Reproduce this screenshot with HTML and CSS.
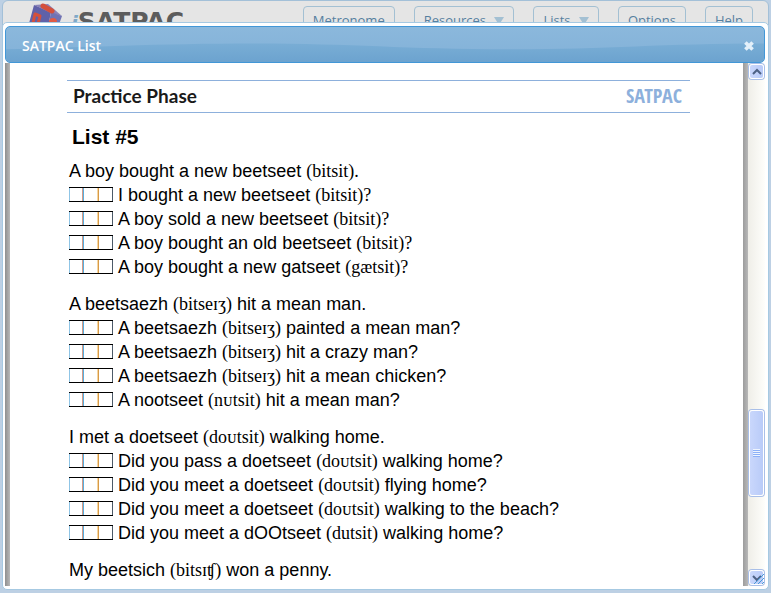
FILE: index.html
```
<!DOCTYPE html>
<html lang="en">
<head>
  <meta charset="UTF-8">
  <meta name="viewport" content="width=device-width, initial-scale=1.0">
  <title>SATPAC List</title>
  <link rel="stylesheet" href="styles.css">
</head>
<body>
  <header class="toolbar">
    <a class="logo" href="#">
      <svg class="logo-cube" viewBox="0 0 36 36" width="36" height="36" aria-hidden="true">
        <path d="M7 2 L24 9 L19 34 L1 24 Z" fill="#6061a8"/>
        <path d="M7 2 L21 1 L35 13 L24 10 Z" fill="#8a83b8"/>
        <path d="M24 9 L35 13 L29 30 L19 34 Z" fill="#7073b4"/>
        <path d="M16 3 L25 8" fill="none" stroke="#d4503c" stroke-width="5" stroke-linecap="round"/>
        <path d="M8 11 L13 13 M8 11 L6 20 M13 13 L11 21" fill="none" stroke="#d4503c" stroke-width="3" stroke-linecap="round"/>
        <circle cx="26" cy="19" r="4" fill="#e05a44"/>
      </svg>
      <span class="logo-text"><i>i</i>SATPAC</span>
    </a>
    <nav class="menu">
      <button type="button">Metronome</button>
      <button type="button">Resources <span class="arrow"></span></button>
      <button type="button">Lists <span class="arrow"></span></button>
      <button type="button">Options</button>
      <button type="button">Help</button>
    </nav>
  </header>

  <section class="dialog" role="dialog" aria-labelledby="dialog-title">
    <div class="titlebar">
      <svg class="wave" viewBox="0 0 760 36" preserveAspectRatio="none" aria-hidden="true">
        <defs>
          <linearGradient id="gloss" x1="0" y1="0" x2="0" y2="1">
            <stop offset="0" stop-color="#79add5"/>
            <stop offset="1" stop-color="#6ca3cf"/>
          </linearGradient>
        </defs>
        <path d="M0 23 C80 21 150 17 250 17 C350 17 400 23 510 23 C600 23 660 17 760 17 V36 H0 Z" fill="url(#gloss)"/>
      </svg>
      <h1 id="dialog-title">SATPAC List</h1>
      <button class="close" type="button" aria-label="Close">
        <svg viewBox="0 0 10 10" width="12" height="12"><path d="M2 2 L8 8 M8 2 L2 8" stroke="#e4f0fa" stroke-width="3"/></svg>
      </button>
    </div>

    <div class="dialog-body">
      <main class="page">
        <div class="page-head">
          <span class="phase">Practice Phase</span>
          <span class="brand">SATPAC</span>
        </div>
        <h2>List #5</h2>

        <div class="group">
          <p>A boy bought a new beetseet <span class="ipa">(bitsit).</span></p>
          <p><span class="ticks"><input type="checkbox" aria-label="First try"><input type="checkbox" aria-label="Second try"><input type="checkbox" aria-label="Third try"></span>I bought a new beetseet <span class="ipa">(bitsit)?</span></p>
          <p><span class="ticks"><input type="checkbox" aria-label="First try"><input type="checkbox" aria-label="Second try"><input type="checkbox" aria-label="Third try"></span>A boy sold a new beetseet <span class="ipa">(bitsit)?</span></p>
          <p><span class="ticks"><input type="checkbox" aria-label="First try"><input type="checkbox" aria-label="Second try"><input type="checkbox" aria-label="Third try"></span>A boy bought an old beetseet <span class="ipa">(bitsit)?</span></p>
          <p><span class="ticks"><input type="checkbox" aria-label="First try"><input type="checkbox" aria-label="Second try"><input type="checkbox" aria-label="Third try"></span>A boy bought a new gatseet <span class="ipa">(gætsit)?</span></p>
        </div>

        <div class="group">
          <p>A beetsaezh <span class="ipa">(bitseɪʒ)</span> hit a mean man.</p>
          <p><span class="ticks"><input type="checkbox" aria-label="First try"><input type="checkbox" aria-label="Second try"><input type="checkbox" aria-label="Third try"></span>A beetsaezh <span class="ipa">(bitseɪʒ)</span> painted a mean man?</p>
          <p><span class="ticks"><input type="checkbox" aria-label="First try"><input type="checkbox" aria-label="Second try"><input type="checkbox" aria-label="Third try"></span>A beetsaezh <span class="ipa">(bitseɪʒ)</span> hit a crazy man?</p>
          <p><span class="ticks"><input type="checkbox" aria-label="First try"><input type="checkbox" aria-label="Second try"><input type="checkbox" aria-label="Third try"></span>A beetsaezh <span class="ipa">(bitseɪʒ)</span> hit a mean chicken?</p>
          <p><span class="ticks"><input type="checkbox" aria-label="First try"><input type="checkbox" aria-label="Second try"><input type="checkbox" aria-label="Third try"></span>A nootseet <span class="ipa">(nᴜtsit)</span> hit a mean man?</p>
        </div>

        <div class="group">
          <p>I met a doetseet <span class="ipa">(doᴜtsit)</span> walking home.</p>
          <p><span class="ticks"><input type="checkbox" aria-label="First try"><input type="checkbox" aria-label="Second try"><input type="checkbox" aria-label="Third try"></span>Did you pass a doetseet <span class="ipa">(doᴜtsit)</span> walking home?</p>
          <p><span class="ticks"><input type="checkbox" aria-label="First try"><input type="checkbox" aria-label="Second try"><input type="checkbox" aria-label="Third try"></span>Did you meet a doetseet <span class="ipa">(doᴜtsit)</span> flying home?</p>
          <p><span class="ticks"><input type="checkbox" aria-label="First try"><input type="checkbox" aria-label="Second try"><input type="checkbox" aria-label="Third try"></span>Did you meet a doetseet <span class="ipa">(doᴜtsit)</span> walking to the beach?</p>
          <p><span class="ticks"><input type="checkbox" aria-label="First try"><input type="checkbox" aria-label="Second try"><input type="checkbox" aria-label="Third try"></span>Did you meet a dOOtseet <span class="ipa">(dutsit)</span> walking home?</p>
        </div>

        <div class="group">
          <p>My beetsich <span class="ipa">(bitsɪʧ)</span> won a penny.</p>
        </div>
      </main>

      <div class="scrollbar">
        <button type="button" aria-label="Scroll up">
          <svg viewBox="0 0 10 8" width="10" height="8"><path d="M1 6 L5 2 L9 6" fill="none" stroke="#4d6185" stroke-width="2"/></svg>
        </button>
        <div class="track-above"></div>
        <div class="thumb"><span class="grip"></span></div>
        <div class="track-below"></div>
        <button type="button" aria-label="Scroll down">
          <svg viewBox="0 0 10 8" width="10" height="8"><path d="M1 2 L5 6 L9 2" fill="none" stroke="#4d6185" stroke-width="2"/></svg>
        </button>
      </div>
    </div>
    <svg class="resize" viewBox="0 0 12 12" width="12" height="12" aria-hidden="true">
      <path d="M1 11 L11 1 M5 11 L11 5 M9 11 L11 9" stroke="#4b9bd8" stroke-width="1"/>
    </svg>
  </section>
</body>
</html>
```

FILE: styles.css
```
* {
  margin: 0;
  padding: 0;
  box-sizing: border-box;
}

body {
  font-family: "Liberation Sans", Arial, sans-serif;
  background: #bdd0e4;
  height: 100vh;
  overflow: hidden;
  padding: 0 2px;
}

button {
  font: inherit;
  cursor: pointer;
}

/* Toolbar behind the dialog */
.toolbar {
  display: flex;
  justify-content: space-between;
  align-items: flex-start;
  height: 48px;
  padding: 2px 15px 0 24px;
  background: #e5e5e5;
  border: 1px solid #a3c0d8;
  border-radius: 6px;
}

.logo {
  display: flex;
  gap: 8px;
  text-decoration: none;
}

.logo-text {
  font-family: "DejaVu Sans", sans-serif;
  font-weight: bold;
  font-size: 25px;
  line-height: 38px;
  color: #5c5c5c;
}

.logo-text i {
  font-size: 20px;
  color: #7fa9c8;
}

.menu {
  display: flex;
  gap: 19px;
  padding-top: 3px;
}

.menu button {
  font-family: "Open Sans", sans-serif;
  font-size: 13px;
  line-height: 16px;
  color: #557f9f;
  background: none;
  border: 1px solid #a3c0d3;
  border-radius: 4px;
  padding: 5px 9px;
}

.arrow {
  display: inline-block;
  margin-left: 5px;
  border: 5px solid transparent;
  border-top: 8px solid #a3c0d3;
  border-bottom: 0;
}

/* Dialog */
.dialog {
  position: absolute;
  inset: 22px 2px 3px;
  display: flex;
  flex-direction: column;
  padding: 3px 3px 3px 2px;
  background: #fff;
  border: 1px solid #a6c9e2;
  border-radius: 5px;
}

.titlebar {
  position: relative;
  display: flex;
  justify-content: space-between;
  align-items: center;
  height: 37px;
  flex: none;
  padding: 2px 9px 0 16px;
  color: #fff;
  background: linear-gradient(#8bb8dc, #82b1d8);
  border: 1px solid #4297d7;
  border-radius: 5px;
  overflow: hidden;
}

.wave {
  position: absolute;
  inset: 0;
  width: 100%;
  height: 100%;
}

.titlebar h1 {
  position: relative;
  font-family: "Open Sans", sans-serif;
  font-size: 14px;
  font-weight: 600;
}

.close {
  position: relative;
  display: flex;
  background: none;
  border: 0;
}

.dialog-body {
  flex: 1;
  min-height: 0;
  display: flex;
}

.page {
  flex: 1;
  overflow: hidden;
  padding: 17px 53px 0 57px;
  border: solid #a9a9a9;
  border-width: 0 5px;
  border-image: linear-gradient(to right, #8f8f8f, #b8b8b8 5px, #8f8f8f 99%, #b8b8b8) 0 5;
  color: #000;
}

.page-head {
  display: flex;
  justify-content: space-between;
  align-items: center;
  height: 33px;
  padding: 0 8px 2px 6px;
  border: solid #8db0dc;
  border-width: 1px 0;
}

.phase {
  font-family: Lato, sans-serif;
  font-size: 19px;
  font-weight: bold;
  color: #1a1a1a;
}

.brand {
  font-family: "Open Sans Condensed", "Lato", sans-serif;
  font-size: 20px;
  line-height: 24px;
  font-weight: bold;
  color: #8db0dc;
}

.page h2 {
  font-size: 21px;
  line-height: 24px;
  padding: 12px 5px 10px;
}

.group {
  padding-left: 2px;
  margin-bottom: 13px;
  font-size: 18px;
  line-height: 24px;
}

.group p {
  display: flex;
  align-items: center;
  white-space: pre;
}

.ticks {
  display: flex;
  margin: 0 5px 1px 0;
}

.ticks input {
  appearance: none;
  width: 15px;
  height: 15px;
  border: solid #000;
  border-width: 1px 0;
  box-shadow: inset 1px 0 #58aede, inset -1px 0 #f6d6a0;
}

.ticks input:first-child {
  width: 14px;
  box-shadow: inset 1px 0 #8fc5e6, inset -1px 0 #d39a88;
}

.ticks input:last-child {
  box-shadow: inset 1px 0 #d79a48, inset -1px 0 #4c5a68;
}

.ipa {
  font-family: "Liberation Serif", "Times New Roman", serif;
}

/* Scrollbar */
.scrollbar {
  display: flex;
  flex-direction: column;
  width: 17px;
  padding: 1px;
  background: linear-gradient(to right, #efeee8, #fefefb);
}

.scrollbar button,
.thumb {
  display: flex;
  justify-content: center;
  align-items: center;
  background: linear-gradient(to right, #c9d7fc, #b9cbf8);
  border: 1px solid #fff;
  border-radius: 3px;
  box-shadow: 0 0 0 1px #a9bfe8;
}

.scrollbar button {
  height: 15px;
  flex: none;
}

.track-above {
  flex: 332;
}

.thumb {
  flex: 85;
}

.track-below {
  flex: 74;
}

.grip {
  width: 7px;
  height: 8px;
  background: repeating-linear-gradient(#eef4fe 0 1px, #8cb0f8 1px 2px);
}

.resize {
  position: absolute;
  right: 3px;
  bottom: 4px;
}
```
